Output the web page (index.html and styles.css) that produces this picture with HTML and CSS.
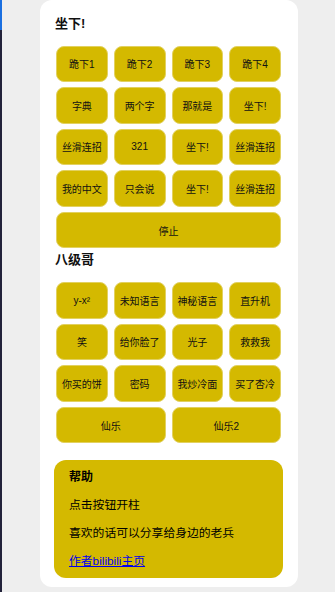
FILE: index.html
```html
<!DOCTYPE html>
<html lang="zh">
<head>
    <meta charset="UTF-8">
    <meta name="viewport" content="width=device-width, initial-scale=1.0">
    <title>坐下!</title>
    <link rel="stylesheet" href="styles.css">
</head>
<body>
    <div class="edge"></div>
    <div class="page">
        <div class="card">
            <h2 class="section-title">坐下!</h2>
            <div class="grid">
                <button class="btn">跪下1</button>
                <button class="btn">跪下2</button>
                <button class="btn">跪下3</button>
                <button class="btn">跪下4</button>
                <button class="btn">字典</button>
                <button class="btn">两个字</button>
                <button class="btn">那就是</button>
                <button class="btn">坐下!</button>
                <button class="btn">丝滑连招</button>
                <button class="btn">321</button>
                <button class="btn">坐下!</button>
                <button class="btn">丝滑连招</button>
                <button class="btn">我的中文</button>
                <button class="btn">只会说</button>
                <button class="btn">坐下!</button>
                <button class="btn">丝滑连招</button>
                <button class="btn wide">停止</button>
            </div>

            <h2 class="section-title second">八级哥</h2>
            <div class="grid">
                <button class="btn">y-x²</button>
                <button class="btn">未知语言</button>
                <button class="btn">神秘语言</button>
                <button class="btn">直升机</button>
                <button class="btn">笑</button>
                <button class="btn">给你脸了</button>
                <button class="btn">光子</button>
                <button class="btn">救救我</button>
                <button class="btn">你买的饼</button>
                <button class="btn">密码</button>
                <button class="btn">我炒冷面</button>
                <button class="btn">买了杏冷</button>
                <button class="btn half">仙乐</button>
                <button class="btn half">仙乐2</button>
            </div>

            <div class="help">
                <h3>帮助</h3>
                <p>点击按钮开柱</p>
                <p>喜欢的话可以分享给身边的老兵</p>
                <p><a href="#">作者bilibili主页</a></p>
            </div>
        </div>
    </div>
</body>
</html>
```

FILE: styles.css
```css
body {
    margin: 0;
    background-color: #eeeeee;
    font-family: "Liberation Sans", "Noto Sans CJK SC", sans-serif;
    display: flex;
    height: 592px;
    overflow: hidden;
}
.edge {
    width: 2px;
    background: linear-gradient(#1a6fe0 0, #1a6fe0 30px, #22223a 30px);
}
.page {
    margin-left: 38px;
}
.card {
    width: 258px;
    height: 587px;
    box-sizing: border-box;
    background-color: white;
    border-radius: 12px;
    padding: 16px 15px 9px 14px;
}
.section-title {
    font-size: 13px;
    line-height: 16px;
    margin: 0 0 13.5px 1px;
    color: #111;
}
.section-title.second {
    margin-top: 4px;
}
.grid {
    display: grid;
    grid-template-columns: repeat(4, 1fr);
    column-gap: 6px;
    row-gap: 5px;
    margin: 0 2px;
}
.btn {
    height: 36.6px;
    background-color: #d4b900;
    border: 1px solid #e2d160;
    border-radius: 8px;
    font-family: inherit;
    font-size: 10px;
    color: #111;
    padding: 0;
    cursor: pointer;
}
.btn:hover {
    background-color: #c9af00;
}
.wide {
    grid-column: span 4;
}
.half {
    grid-column: span 2;
}
.help {
    margin-top: 17px;
    background-color: #d4b900;
    border-radius: 12px;
    padding: 9px 15px;
    font-size: 11.8px;
    line-height: 16px;
}
.help h3 {
    font-size: 12px;
    margin: 0;
}
.help p {
    margin: 12px 0 0;
}
.help a {
    color: #0000ee;
}
```
